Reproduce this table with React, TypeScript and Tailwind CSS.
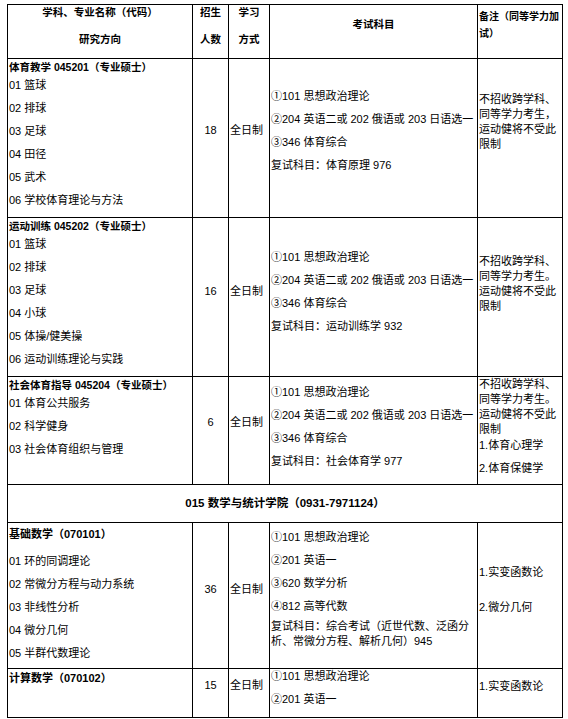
import type { ReactNode } from 'react';

type Program = {
  title: string;
  titleClass: string;
  firstGap: string;
  directions: string[];
  subjectPad: string;
  count: string;
  countPad: string;
  exams: string[];
  examPad: string;
  retest: string;
  retestGap: string;
  remark: ReactNode;
};

const cell = 'border-r border-b border-black';

const sportsRemark = (mark: string) => (
  <p className="leading-[15px]">不招收跨学科、同等学力考生{mark}运动健将不受此限制</p>
);

const sportsExams = ['①101 思想政治理论', '②204 英语二或 202 俄语或 203 日语选一', '③346 体育综合'];

const programs: Program[] = [
  {
    title: '体育教学 045201（专业硕士）',
    titleClass: 'text-[10.5px] font-bold',
    firstGap: 'mt-[3px]',
    directions: ['01 篮球', '02 排球', '03 足球', '04 田径', '05 武术', '06 学校体育理论与方法'],
    subjectPad: 'pt-[1px]',
    count: '18',
    countPad: 'pt-[64px]',
    exams: sportsExams,
    examPad: 'pt-[30px]',
    retest: '复试科目：体育原理 976',
    retestGap: 'mt-[8px]',
    remark: <div className="pt-[33px]">{sportsRemark('，')}</div>,
  },
  {
    title: '运动训练 045202（专业硕士）',
    titleClass: 'text-[10.5px] font-bold',
    firstGap: 'mt-[3px]',
    directions: ['01 篮球', '02 排球', '03 足球', '04 小球', '05 体操/健美操', '06 运动训练理论与实践'],
    subjectPad: 'pt-[1px]',
    count: '16',
    countPad: 'pt-[66px]',
    exams: sportsExams,
    examPad: 'pt-[32px]',
    retest: '复试科目：运动训练学 932',
    retestGap: 'mt-[8px]',
    remark: <div className="pt-[36px]">{sportsRemark('。')}</div>,
  },
  {
    title: '社会体育指导 045204（专业硕士）',
    titleClass: 'text-[10.5px] font-bold',
    firstGap: 'mt-[3px]',
    directions: ['01 体育公共服务', '02 科学健身', '03 社会体育组织与管理'],
    subjectPad: 'pt-[1px]',
    count: '6',
    countPad: 'pt-[38px]',
    exams: sportsExams,
    examPad: 'pt-[8px]',
    retest: '复试科目：社会体育学 977',
    retestGap: 'mt-[8px]',
    remark: (
      <div>
        {sportsRemark('。')}
        <p className="mt-[1px]">1.体育心理学</p>
        <p className="mt-[8px]">2.体育保健学</p>
      </div>
    ),
  },
];

const mathPrograms: Program[] = [
  {
    title: '基础数学（070101）',
    titleClass: 'text-[11px] font-bold',
    firstGap: 'mt-[12px]',
    directions: ['01 环的同调理论', '02 常微分方程与动力系统', '03 非线性分析', '04 微分几何', '05 半群代数理论'],
    subjectPad: 'pt-[4px]',
    count: '36',
    countPad: 'pt-[59px]',
    exams: ['①101 思想政治理论', '②201 英语一', '③620 数学分析', '④812 高等代数'],
    examPad: 'pt-[7px]',
    retest: '复试科目：综合考试（近世代数、泛函分析、常微分方程、解析几何）945',
    retestGap: 'mt-[5px]',
    remark: (
      <div className="pt-[42px]">
        <p>1.实变函数论</p>
        <p className="mt-[20px]">2.微分几何</p>
      </div>
    ),
  },
  {
    title: '计算数学（070102）',
    titleClass: 'text-[11px] font-bold',
    firstGap: 'mt-[12px]',
    directions: [],
    subjectPad: 'pt-[2px]',
    count: '15',
    countPad: 'pt-[9px]',
    exams: ['①101 思想政治理论', '②201 英语一'],
    examPad: 'pt-0',
    retest: '',
    retestGap: 'mt-0',
    remark: (
      <div className="pt-[10px]">
        <p>1.实变函数论</p>
      </div>
    ),
  },
];

function ProgramRow({ p }: { p: Program }) {
  return (
    <>
      <div className={`${cell} pl-[1px] ${p.subjectPad}`}>
        <p className={`${p.titleClass} whitespace-nowrap`}>{p.title}</p>
        {p.directions.length > 0 && (
          <ul className={`${p.firstGap} flex flex-col gap-[8px]`}>
            {p.directions.map((d) => (
              <li key={d} className="whitespace-nowrap">{d}</li>
            ))}
          </ul>
        )}
      </div>
      <div className={`${cell} text-center ${p.countPad}`}>{p.count}</div>
      <div className={`${cell} pl-[1px] whitespace-nowrap ${p.countPad}`}>全日制</div>
      <div className={`${cell} pl-[1px] ${p.examPad}`}>
        <ul className="flex flex-col gap-[8px]">
          {p.exams.map((e) => (
            <li key={e} className="whitespace-nowrap">{e}</li>
          ))}
        </ul>
        {p.retest && <p className={p.retestGap}>{p.retest}</p>}
      </div>
      <div className={`${cell} pl-[1px]`}>{p.remark}</div>
    </>
  );
}

export default function App() {
  return (
    <div className="min-h-[719px] bg-white pt-[4px] pl-[7px] text-black font-[family-name:'Liberation_Sans','Noto_Sans_CJK_SC',sans-serif] text-[11px] leading-[15px]">
      <div className="grid w-[556px] grid-cols-[185px_36px_41px_208px_85px] grid-rows-[54px_159px_159px_108px_38px_146px_49px] border-l border-t border-black">
        {/* header */}
        <div className={`${cell} text-center text-[10.5px] font-bold`}>
          <p>学科、专业名称（代码）</p>
          <p className="mt-[12px]">研究方向</p>
        </div>
        <div className={`${cell} text-center text-[10.5px] font-bold`}>
          <p>招生</p>
          <p className="mt-[12px]">人数</p>
        </div>
        <div className={`${cell} text-center text-[10.5px] font-bold`}>
          <p>学习</p>
          <p className="mt-[12px]">方式</p>
        </div>
        <div className={`${cell} pt-[12px] text-center text-[10.5px] font-bold`}>考试科目</div>
        <div className={`${cell} pl-[1px] pt-[3px] text-[10px] font-bold leading-[17px]`}>
          备注（同等学力加
          <br />
          试）
        </div>

        {programs.map((p) => (
          <ProgramRow key={p.title} p={p} />
        ))}

        <div className={`${cell} col-span-5 flex items-center justify-center text-[11.5px] font-bold`}>
          015 数学与统计学院（0931-7971124）
        </div>

        {mathPrograms.map((p) => (
          <ProgramRow key={p.title} p={p} />
        ))}
      </div>
    </div>
  );
}
